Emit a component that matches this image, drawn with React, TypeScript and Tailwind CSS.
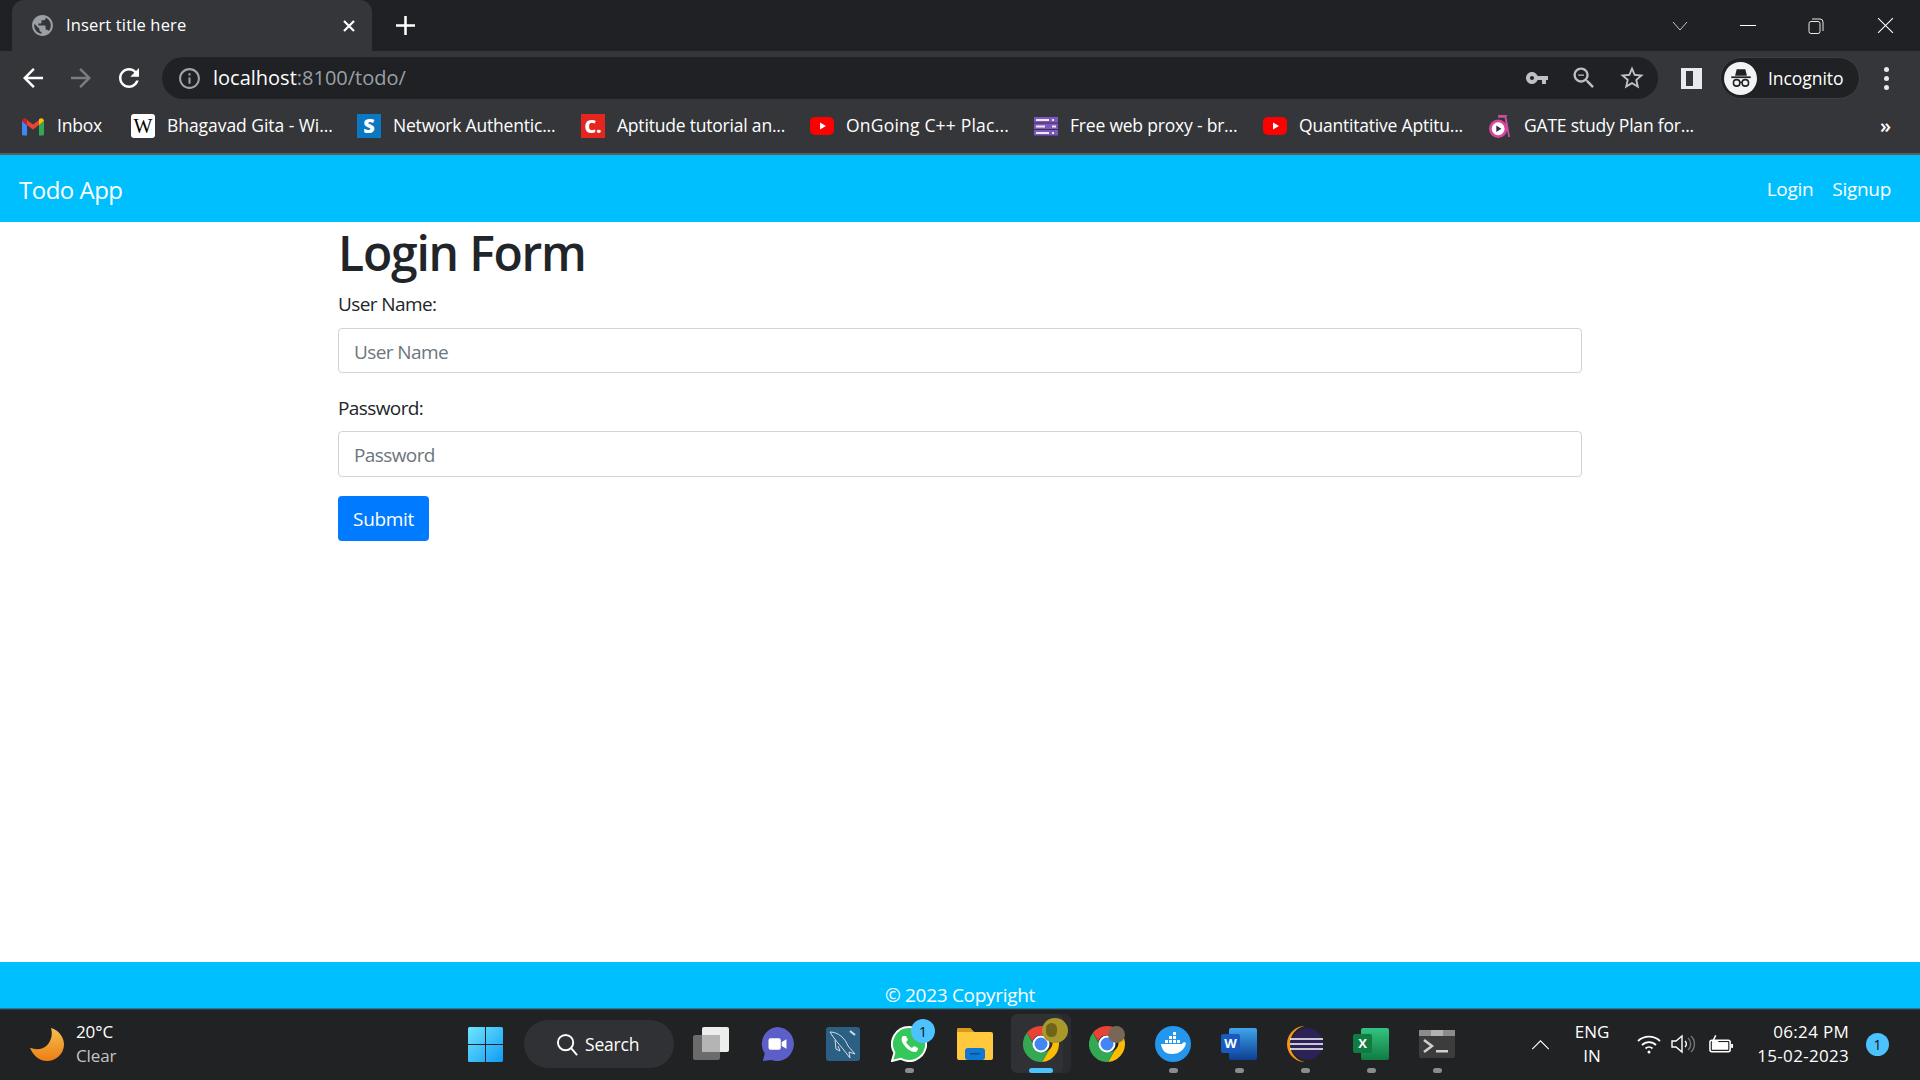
import React from "react";

const Mi = ({ d, className }: { d: string; className: string }) => (
  <svg viewBox="0 0 24 24" fill="currentColor" className={className}>
    <path d={d} />
  </svg>
);

const GLOBE =
  "M12 2C6.48 2 2 6.48 2 12s4.48 10 10 10 10-4.48 10-10S17.52 2 12 2zm-1 17.93c-3.95-.49-7-3.85-7-7.93 0-.62.08-1.21.21-1.79L9 15v1c0 1.1.9 2 2 2v1.93zm6.9-2.54c-.26-.81-1-1.39-1.9-1.39h-1v-3c0-.55-.45-1-1-1H8v-2h2c.55 0 1-.45 1-1V7h2c1.1 0 2-.9 2-2v-.41c2.93 1.19 5 4.06 5 7.41 0 2.08-.8 3.97-2.1 5.39z";
const BACK = "M20 11H7.83l5.59-5.59L12 4l-8 8 8 8 1.41-1.41L7.83 13H20v-2z";
const FORWARD = "M12 4l-1.41 1.41L16.17 11H4v2h12.17l-5.58 5.59L12 20l8-8z";
const RELOAD =
  "M17.65 6.35C16.2 4.9 14.21 4 12 4c-4.42 0-7.99 3.58-7.99 8s3.57 8 7.99 8c3.73 0 6.84-2.55 7.73-6h-2.08c-.82 2.33-3.04 4-5.65 4-3.31 0-6-2.69-6-6s2.69-6 6-6c1.66 0 3.14.69 4.22 1.78L13 11h7V4l-2.35 2.35z";
const INFO =
  "M11 7h2v2h-2zm0 4h2v6h-2zm1-9C6.48 2 2 6.48 2 12s4.48 10 10 10 10-4.48 10-10S17.52 2 12 2zm0 18c-4.41 0-8-3.59-8-8s3.59-8 8-8 8 3.59 8 8-3.59 8-8 8z";
const KEY =
  "M12.65 10C11.83 7.67 9.61 6 7 6c-3.31 0-6 2.69-6 6s2.69 6 6 6c2.61 0 4.83-1.67 5.65-4H17v4h4v-4h2v-4H12.65zM7 14c-1.1 0-2-.9-2-2s.9-2 2-2 2 .9 2 2-.9 2-2 2z";
const ZOOM_OUT =
  "M15.5 14h-.79l-.28-.27C15.41 12.59 16 11.11 16 9.5 16 5.91 13.09 3 9.5 3S3 5.91 3 9.5 5.91 16 9.5 16c1.61 0 3.09-.59 4.23-1.57l.27.28v.79l5 4.99L20.49 19l-4.99-5zm-6 0C7.01 14 5 11.99 5 9.5S7.01 5 9.5 5 14 7.01 14 9.5 11.99 14 9.5 14zM7 9h5v1H7z";
const STAR =
  "M22 9.24l-7.19-.62L12 2 9.19 8.63 2 9.24l5.46 4.73L5.82 21 12 17.27 18.18 21l-1.63-7.03L22 9.24zM12 15.4l-3.76 2.27 1-4.28-3.32-2.88 4.38-.38L12 6.1l1.71 4.04 4.38.38-3.32 2.88 1 4.28L12 15.4z";

const YouTubeIcon = () => (
  <svg viewBox="0 0 24 24" className="w-[24px] h-[24px]">
    <rect x="0" y="3" width="24" height="18" rx="5" fill="#ff0000" />
    <path d="M10 8.500v7l6-3.500z" fill="#fff" />
  </svg>
);

const GmailIcon = () => (
  <svg viewBox="0 0 24 20" className="w-[24px] h-[20px]">
    <path d="M1 5v13a1.500 1.500 0 0 0 1.500 1.500H6V9z" fill="#4285f4" />
    <path d="M23 5v13a1.500 1.500 0 0 1-1.500 1.500H18V9z" fill="#34a853" />
    <path d="M6 9v-5l6 4.600L18 4v5l-6 4.600z" fill="#ea4335" />
    <path d="M1 5c0-2.500 2.800-3.600 4.500-2.300L6 3.200V9L1 5z" fill="#c5221f" />
    <path d="M23 5c0-2.500-2.800-3.600-4.500-2.300l-.5.5V9l5-4z" fill="#fbbc04" />
  </svg>
);

const ProxyIcon = () => (
  <svg viewBox="0 0 24 20" className="w-[24px] h-[20px]">
    <rect width="24" height="5.500" y="1" fill="#7e57c2" />
    <rect width="24" height="5.500" y="7.500" fill="#7e57c2" />
    <rect width="24" height="5.500" y="14" fill="#7e57c2" />
    <rect x="2" y="3" width="13" height="2" fill="#ede7f6" />
    <rect x="18" y="3" width="2" height="2" fill="#ede7f6" />
    <rect x="2" y="9.500" width="9" height="2" fill="#ede7f6" />
    <rect x="18" y="9.500" width="4" height="2" fill="#ede7f6" />
    <rect x="2" y="16" width="13" height="2" fill="#ede7f6" />
    <rect x="18" y="16" width="2" height="2" fill="#ede7f6" />
  </svg>
);

const GateIcon = () => (
  <svg viewBox="0 0 24 28" className="w-[22px] h-[26px]">
    <path d="M10 2h10l-1 2 4 22h-2L17 5h-7z" fill="#c94f9c" />
    <circle cx="10" cy="17" r="8.500" fill="#fff" stroke="#d9479b" strokeWidth="3" />
    <path d="M8 13.500v7l5.500-3.500z" fill="#2d2a5e" />
  </svg>
);

const bookmarks = [
  { label: "Inbox", w: "w-[110px]", t: "tracking-[-0.2px]", icon: <GmailIcon /> },
  {
    label: "Bhagavad Gita - Wi...",
    w: "w-[226px]",
    t: "tracking-[-0.05px]",
    icon: (
      <span className="w-[24px] h-[24px] bg-white rounded-[3px] flex items-center justify-center text-black text-[20px] leading-none font-['Liberation_Serif',serif]">
        W
      </span>
    ),
  },
  {
    label: "Network Authentic...",
    w: "w-[224px]",
    t: "tracking-[-0.2px]",
    icon: (
      <span className="w-[24px] h-[24px] bg-[#0a78c2] flex items-center justify-center text-white text-[20px] leading-none font-black">
        S
      </span>
    ),
  },
  {
    label: "Aptitude tutorial an...",
    w: "w-[229px]",
    t: "tracking-[-0.2px]",
    icon: (
      <span className="w-[24px] h-[24px] bg-[#e5261f] flex items-center justify-center text-white text-[18px] leading-none font-black">
        C.
      </span>
    ),
  },
  { label: "OnGoing C++ Plac...", w: "w-[224px]", t: "tracking-[0.2px]", icon: <YouTubeIcon /> },
  { label: "Free web proxy - br...", w: "w-[229px]", t: "tracking-[-0.2px]", icon: <ProxyIcon /> },
  { label: "Quantitative Aptitu...", w: "w-[225px]", t: "tracking-[-0.2px]", icon: <YouTubeIcon /> },
  { label: "GATE study Plan for...", w: "w-[230px]", t: "tracking-[-0.2px]", icon: <GateIcon /> },
];

const ChromeLogo = () => (
  <svg viewBox="0 0 36 36" className="relative w-[36px] h-[36px]">
    <path d="M18 0a18 18 0 0 1 15.600 9H18a9 9 0 0 0-8.600 6.300L3.900 6.700A18 18 0 0 1 18 0z" fill="#ea4335" />
    <path d="M33.600 9A18 18 0 0 1 19 36l7-12a9 9 0 0 0-1-15z" fill="#fbbc04" />
    <path d="M3.900 6.700l8.400 14.500A9 9 0 0 0 26 24l-7 12A18 18 0 0 1 3.900 6.700z" fill="#34a853" />
    <circle cx="18" cy="18" r="7.500" fill="#4285f4" stroke="#fff" strokeWidth="2" />
  </svg>
);

const TaskbarApp = ({
  children,
  dot,
  active,
}: {
  children: React.ReactNode;
  dot?: boolean;
  active?: boolean;
}) => (
  <div className="relative w-[66px] h-[60px] flex items-center justify-center pb-[2px]">
    {active && (
      <>
        <span className="absolute top-[-1px] left-[6px] w-[57px] h-[59px] rounded-[6px] bg-[#292b2e]" />
        <span className="absolute top-[-1px] left-[3px] w-[52px] h-[59px] rounded-[6px] bg-[#2f3134]" />
      </>
    )}
    {children}
    {dot && (
      <span className="absolute bottom-[2px] left-[29px] w-[9px] h-[5px] rounded-full bg-[#8a8b8d]" />
    )}
    {active && (
      <span className="absolute bottom-[2px] left-[21px] w-[24px] h-[5px] rounded-full bg-[#4cc2ff]" />
    )}
  </div>
);

export default function App() {
  return (
    <div className="w-[1920px] h-[1080px] flex flex-col overflow-hidden bg-white font-['Open_Sans',sans-serif] text-[#212529]">
      {/* barra de pestañas */}
      <div className="h-[51px] shrink-0 bg-[#202124] flex items-end pl-[12px] text-white">
        <div className="w-[360px] h-[51px] bg-[#35363a] rounded-t-[12px] flex items-center pl-[18px] pr-[16px]">
          <Mi d={GLOBE} className="w-[25px] h-[25px] text-[#9aa0a6]" />
          <span className="ml-[11px] text-[16.5px] flex-1 tracking-[0.15px]">Insert title here</span>
          <svg viewBox="0 0 14 14" className="w-[14px] h-[14px]" stroke="white" strokeWidth="2.200">
            <path d="M2 2l10 10M12 2L2 12" />
          </svg>
        </div>
        <div className="h-[51px] flex items-center ml-[24px]">
          <svg viewBox="0 0 18 18" className="w-[19px] h-[19px]" stroke="white" strokeWidth="2.400">
            <path d="M9 0v18M0 9h18" />
          </svg>
        </div>
        <div className="ml-auto h-[51px] flex items-center">
          <div className="w-[68px] flex justify-center">
            <svg viewBox="0 0 16 10" className="w-[16px] h-[10px]" fill="none" stroke="#c4c4c4" strokeWidth="1">
              <path d="M1 1l7 8 7-8" />
            </svg>
          </div>
          <div className="w-[68px] flex justify-center">
            <span className="w-[16px] h-px bg-white" />
          </div>
          <div className="w-[68px] flex justify-center">
            <svg viewBox="0 0 16 16" className="w-[16px] h-[16px]" fill="none" stroke="#e8e8e8" strokeWidth="1">
              <rect x="1" y="3.500" width="11" height="12" rx="2" />
              <path d="M4 1h8a3 3 0 0 1 3 3v9" />
            </svg>
          </div>
          <div className="w-[70px] flex justify-center">
            <svg viewBox="0 0 16 16" className="w-[17px] h-[17px]" stroke="white" strokeWidth="1">
              <path d="M1 1l14 14M15 1L1 15" />
            </svg>
          </div>
        </div>
      </div>

      {/* barra de direcciones */}
      <div className="h-[48px] shrink-0 bg-[#35363a] flex items-start pt-[6px] text-white">
        <div className="flex items-center h-[42px] pl-[18px]">
          <Mi d={BACK} className="w-[30px] h-[30px] text-white mr-[18px]" />
          <Mi d={FORWARD} className="w-[30px] h-[30px] text-[#7b7c7e] mr-[18px]" />
          <Mi d={RELOAD} className="w-[30px] h-[30px] text-white" />
        </div>
        <div className="ml-[18px] w-[1496px] h-[42px] bg-[#202124] rounded-full flex items-center pl-[15px] pr-[12px]">
          <Mi d={INFO} className="w-[25px] h-[25px] text-[#a0a3a7]" />
          <span className="ml-[11px] text-[20px] flex-1 tracking-[0px]">
            localhost<span className="text-[#9aa0a6]">:8100/todo/</span>
          </span>
          <div className="flex items-center gap-[20px]">
            <Mi d={KEY} className="w-[24px] h-[24px] text-[#bdc1c6] mr-[1px]" />
            <Mi d={ZOOM_OUT} className="w-[28px] h-[28px] text-[#bdc1c6]" />
            <Mi d={STAR} className="w-[28px] h-[28px] text-[#bdc1c6]" />
          </div>
        </div>
        <div className="ml-[23px] h-[42px] flex items-center">
          <span className="w-[21px] h-[21px] bg-[#35363a] border-y-[3px] border-l-[5px] border-r-[9px] border-[#e8eaed]" />
        </div>
        <div className="ml-[18px] w-[140px] h-[42px] rounded-full bg-[#202124] border border-[#3f4044] flex items-center pl-[3px]">
          <span className="w-[33px] h-[33px] rounded-full bg-[#f1f3f4] flex items-center justify-center">
            <svg viewBox="0 0 24 24" className="w-[26px] h-[26px]" fill="#202124">
              <path d="M8 4h8l1.500 6h-11z" />
              <rect x="3" y="10.500" width="18" height="1.600" />
              <circle cx="8" cy="16.500" r="3" fill="none" stroke="#202124" strokeWidth="1.400" />
              <circle cx="16" cy="16.500" r="3" fill="none" stroke="#202124" strokeWidth="1.400" />
              <path d="M11 16h2" stroke="#202124" strokeWidth="1.200" />
            </svg>
          </span>
          <span className="ml-[11px] text-[17.5px] tracking-[-0.05px]">Incognito</span>
        </div>
        <div className="ml-[24px] h-[42px] flex flex-col justify-center items-center gap-[4px]">
          <span className="w-[5px] h-[5px] rounded-full bg-[#e8eaed]" />
          <span className="w-[5px] h-[5px] rounded-full bg-[#e8eaed]" />
          <span className="w-[5px] h-[5px] rounded-full bg-[#e8eaed]" />
        </div>
      </div>

      {/* marcadores */}
      <div className="h-[56px] shrink-0 bg-[#35363a] border-b-2 border-[#5d5e62] flex items-center pl-[21px] text-white">
        {bookmarks.map((b) => (
          <div key={b.label} className={`${b.w} shrink-0 flex items-center`}>
            <span className="w-[24px] flex justify-center">{b.icon}</span>
            <span className={`ml-[12px] mb-[2px] text-[17.5px] ${b.t} whitespace-nowrap`}>{b.label}</span>
          </div>
        ))}
        <span className="ml-auto mr-[29px] text-[20px] leading-none font-semibold">»</span>
      </div>

      {/* navbar de la app */}
      <div className="h-[67px] shrink-0 bg-[#00bfff] flex items-center justify-between pl-[19px] pr-[29px] pt-[2px] text-white">
        <span className="text-[24px] tracking-[-0.5px]">Todo App</span>
        <div className="flex items-center gap-[19px] text-[19px] tracking-[-0.3px]">
          <span>Login</span>
          <span>Signup</span>
        </div>
      </div>

      {/* formulario */}
      <div className="flex-1 w-[1244px] mx-auto">
        <h1 className="text-[48px] leading-[58px] font-semibold tracking-[-1.2px] mt-[2px] mb-[9px] whitespace-nowrap">
          Login Form
        </h1>
        <label className="block text-[19px] leading-[27px] tracking-[-0.6px] mb-[10px]">User Name:</label>
        <input
          placeholder="User Name"
          className="block w-full h-[45px] px-[15px] pt-[2px] text-[19px] tracking-[-0.6px] border border-[#ced4da] rounded-[4px] outline-none placeholder:text-[#6c757d] mb-[22px]"
        />
        <label className="block text-[19px] leading-[27px] tracking-[-0.6px] mb-[9px]">Password:</label>
        <input
          placeholder="Password"
          className="block w-full h-[46px] px-[15px] pt-[2px] text-[19px] tracking-[-0.6px] border border-[#ced4da] rounded-[4px] outline-none placeholder:text-[#6c757d] mb-[19px]"
        />
        <button className="w-[91px] h-[45px] pt-[2px] bg-[#007bff] text-white text-[19px] tracking-[-0.35px] rounded-[4px]">
          Submit
        </button>
      </div>

      {/* footer */}
      <div className="h-[47px] shrink-0 bg-[#00bfff] border-b border-[#1b7f9f] flex items-end justify-center text-white text-[19px] tracking-[-0.3px] leading-[26px]">
        © 2023 Copyright
      </div>

      {/* barra de tareas */}
      <div className="h-[71px] shrink-0 bg-[#202224] border-t border-[#35373a] flex items-center relative text-white">
        <div className="w-[468px] flex items-center pl-[30px] pb-[2px] shrink-0">
          <svg viewBox="0 0 34 40" preserveAspectRatio="none" className="w-[34px] h-[33px]">
            <defs>
              <linearGradient id="moon" x1="0" y1="0" x2="0" y2="1">
                <stop offset="0" stopColor="#f2c14e" />
                <stop offset="1" stopColor="#ee7d14" />
              </linearGradient>
            </defs>
            <path d="M21 0c8 3 13 11 13 20 0 11-8 20-17 20C9 40 3 33 0 24c6 3 13 2 17-3 4-5 6-13 4-21z" fill="url(#moon)" />
          </svg>
          <div className="ml-[12px] flex flex-col text-[17px] leading-[24px] tracking-[-0.1px]">
            <span>20°C</span>
            <span className="text-[#c4c5c6]">Clear</span>
          </div>
        </div>

        <svg viewBox="0 0 35 35" className="w-[35px] h-[35px] shrink-0 mb-[2px]">
          <defs>
            <linearGradient id="win" x1="0" y1="0" x2="1" y2="1">
              <stop offset="0" stopColor="#6fe6fd" />
              <stop offset="1" stopColor="#0f9bf5" />
            </linearGradient>
          </defs>
          <path d="M0 1.500A1.500 1.500 0 0 1 1.500 0H17v17H0zM18 0h15.500A1.500 1.500 0 0 1 35 1.500V17H18zM0 18h17v17H1.500A1.500 1.500 0 0 1 0 33.500zM18 18h17v15.500a1.500 1.500 0 0 1-1.500 1.500H18z" fill="url(#win)" />
        </svg>

        <div className="ml-[21px] w-[150px] h-[48px] mb-[2px] rounded-full bg-[#2f3134] flex items-center pl-[32px] shrink-0">
          <svg viewBox="0 0 24 24" className="w-[23px] h-[23px]" fill="none" stroke="white" strokeWidth="2">
            <circle cx="10" cy="10" r="8" />
            <path d="M16 16l6 7" />
          </svg>
          <span className="ml-[6px] text-[17.5px] tracking-[-0.2px]">Search</span>
        </div>

        <div className="ml-[4px] flex items-center shrink-0">
          <TaskbarApp>
            <svg viewBox="0 0 36 36" className="w-[36px] h-[36px]">
              <rect x="0" y="9" width="27" height="25" rx="2" fill="#6b6b6b" />
              <rect x="9" y="1" width="27" height="25" rx="2" fill="#ededed" />
              <rect x="9" y="9" width="18" height="17" fill="#b4b4b4" />
            </svg>
          </TaskbarApp>
          <TaskbarApp>
            <svg viewBox="0 0 36 36" className="w-[34px] h-[34px]">
              <path d="M18 0a18 18 0 1 1-6 35l-9 1 2-8A18 18 0 0 1 18 0z" fill="#5b5fc7" />
              <rect x="9" y="12" width="13" height="12" rx="2" fill="#fff" />
              <path d="M23 16l5-3v10l-5-3z" fill="#fff" />
            </svg>
          </TaskbarApp>
          <TaskbarApp>
            <div className="w-[34px] h-[34px] rounded-[3px] bg-[#2b5f84] flex items-center justify-center">
              <svg viewBox="0 0 34 34" className="w-[34px] h-[34px]" fill="none" stroke="#d4dde4" strokeWidth="1">
                <path d="M4 5c8 0 15 6 18 14l7 8-6-2 1 6-7-9C13 17 8 12 4 5zM9 13l1 9 4 2-2-5" />
                <path d="M24 4l5 4" strokeWidth="2" />
              </svg>
            </div>
          </TaskbarApp>
          <TaskbarApp dot>
            <svg viewBox="0 0 36 36" className="w-[36px] h-[36px]">
              <path d="M18 1a17 17 0 0 0-14.600 25.700L1 35l8.600-2.300A17 17 0 1 0 18 1z" fill="#34c759" stroke="#fff" strokeWidth="2" />
              <path d="M12 10c-2 2-2 5 1 9s7 7 11 7c2 0 3-2 3-4l-4-2-2 2c-2-1-5-4-6-6l2-2-2-4z" fill="#fff" />
            </svg>
            <span className="absolute top-[4px] left-[35px] w-[24px] h-[24px] rounded-full bg-[#4cc2ff] flex items-center justify-center text-[#111] text-[14px]">
              1
            </span>
          </TaskbarApp>
          <TaskbarApp>
            <svg viewBox="0 0 36 32" className="w-[36px] h-[32px]">
              <path d="M0 2a2 2 0 0 1 2-2h11l4 4h17a2 2 0 0 1 2 2v24a2 2 0 0 1-2 2H2a2 2 0 0 1-2-2z" fill="#ffc83d" />
              <path d="M0 2a2 2 0 0 1 2-2h11l4 4H0z" fill="#d99a1a" />
              <rect x="8" y="20" width="20" height="12" rx="3" fill="#0f78d4" />
              <rect x="13" y="25" width="10" height="1.500" fill="#0a4f8c" />
            </svg>
          </TaskbarApp>
          <TaskbarApp active>
            <ChromeLogo />
            <span className="absolute top-[3px] left-[34px] w-[26px] h-[25px] rounded-full bg-[#a8972b]" />
            <span className="absolute top-[8px] left-[38px] w-[11px] h-[14px] rounded-full bg-[#6f641a]" />
          </TaskbarApp>
          <TaskbarApp>
            <ChromeLogo />
            <span className="absolute top-[11px] left-[34px] w-[17px] h-[17px] rounded-full bg-[#7a6656]" />
          </TaskbarApp>
          <TaskbarApp dot>
            <svg viewBox="0 0 36 36" className="w-[36px] h-[36px]">
              <circle cx="18" cy="18" r="18" fill="#2496ed" />
              <path d="M6 18h21c1-2 3-2 4-1-1 6-6 11-14 11-6 0-10-3-11-10z" fill="#fff" />
              <path d="M10 14h3v3h-3zM14 14h3v3h-3zM18 14h3v3h-3zM14 10h3v3h-3zM18 10h3v3h-3zM18 6h3v3h-3zM22 14h3v3h-3z" fill="#fff" />
            </svg>
          </TaskbarApp>
          <TaskbarApp dot>
            <div className="relative w-[36px] h-[32px]">
              <span className="absolute left-[8px] top-0 w-[28px] h-[32px] rounded-[2px] bg-gradient-to-b from-[#41a5ee] to-[#103f91]" />
              <span className="absolute left-0 top-[6px] w-[19px] h-[19px] rounded-[2px] bg-[#185abd] flex items-center justify-center text-white text-[13px] font-bold leading-none">
                W
              </span>
            </div>
          </TaskbarApp>
          <TaskbarApp dot>
            <svg viewBox="0 0 36 36" className="w-[36px] h-[36px]">
              <path d="M18 0a18 18 0 0 0 0 36c-8-1-15-9-15-18S10 1 18 0z" fill="#f7941e" />
              <circle cx="20" cy="18" r="16" fill="#2c2255" />
              <path d="M3 13h33M3 18h33M3 23h33" stroke="#fff" strokeWidth="1.700" />
            </svg>
          </TaskbarApp>
          <TaskbarApp dot>
            <div className="relative w-[36px] h-[32px]">
              <span className="absolute left-[8px] top-0 w-[28px] h-[32px] rounded-[2px] bg-gradient-to-b from-[#33c481] to-[#107c41]" />
              <span className="absolute left-0 top-[6px] w-[19px] h-[19px] rounded-[2px] bg-[#107c41] flex items-center justify-center text-white text-[13px] font-bold leading-none">
                X
              </span>
            </div>
          </TaskbarApp>
          <TaskbarApp dot>
            <svg viewBox="0 0 36 28" className="w-[36px] h-[28px]">
              <rect width="36" height="28" rx="2" fill="#3c3c3c" />
              <rect width="36" height="6" fill="#8c8c8c" />
              <rect x="12" width="12" height="6" fill="#b3b3b3" />
              <path d="M5 10l8 6-8 6" fill="none" stroke="#d0d0d0" strokeWidth="2.500" />
              <rect x="17" y="20" width="12" height="2.500" fill="#d0d0d0" />
            </svg>
          </TaskbarApp>
        </div>

        {/* bandeja del sistema */}
        <div className="ml-auto flex items-center pr-[31px] pb-[2px]">
          <svg viewBox="0 0 20 12" className="w-[19px] h-[11px]" fill="none" stroke="white" strokeWidth="1.200">
            <path d="M1 11l9-9 9 9" />
          </svg>
          <div className="ml-[21px] w-[42px] flex flex-col items-center text-[17px] leading-[24px] tracking-[0px]">
            <span>ENG</span>
            <span>IN</span>
          </div>
          <svg viewBox="0 0 24 20" className="ml-[24px] w-[24px] h-[20px]" fill="none" stroke="white" strokeWidth="1.800">
            <path d="M1 7a16 16 0 0 1 22 0M5 11a10 10 0 0 1 14 0M8.500 14.500a5 5 0 0 1 7 0" />
            <circle cx="12" cy="18" r="1.500" fill="white" stroke="none" />
          </svg>
          <svg viewBox="0 0 24 20" className="ml-[10px] w-[24px] h-[20px]" fill="none" stroke="white" strokeWidth="1.400">
            <path d="M1 7h4l6-5v16l-6-5H1z" />
            <path d="M14 7a4 4 0 0 1 0 6" />
            <path d="M17 4a8 8 0 0 1 0 12M20 2a11 11 0 0 1 0 16" stroke="#777" />
          </svg>
          <svg viewBox="0 0 26 20" className="ml-[14px] w-[25px] h-[20px]" fill="none" stroke="white" strokeWidth="1.600">
            <rect x="1" y="6" width="21" height="12" rx="2" />
            <rect x="3" y="8" width="17" height="8" fill="white" stroke="none" />
            <rect x="23" y="10" width="2" height="4" fill="white" stroke="none" />
            <path d="M7 1L4 7h5l-3 5" stroke="white" />
          </svg>
          <div className="ml-[23px] w-[92px] flex flex-col items-end text-[17px] leading-[24px] tracking-[0.3px] whitespace-nowrap">
            <span>06:24 PM</span>
            <span>15-02-2023</span>
          </div>
          <span className="ml-[17px] w-[23px] h-[23px] rounded-full bg-[#4cc2ff] flex items-center justify-center text-[#111] text-[14px]">
            1
          </span>
        </div>
      </div>
    </div>
  );
}
